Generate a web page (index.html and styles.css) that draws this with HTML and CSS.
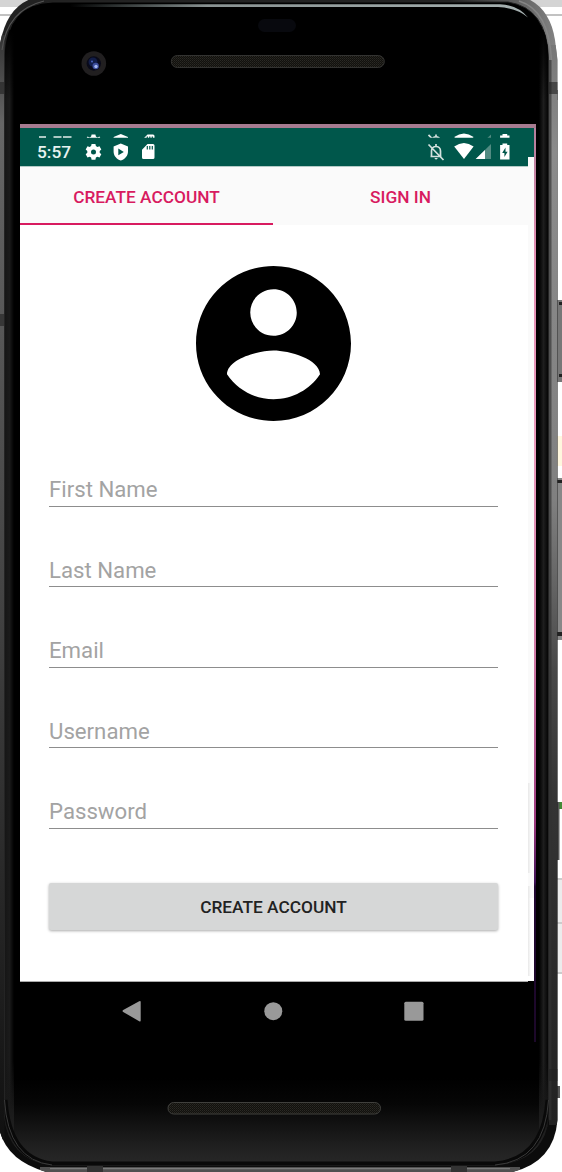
FILE: index.html
```html
<!DOCTYPE html>
<html lang="en">
<head>
<meta charset="utf-8">
<title>Create Account</title>
<link rel="stylesheet" href="styles.css">
</head>
<body>
<svg class="device" viewBox="0 0 562 1172" aria-hidden="true">
  <defs>
    <linearGradient id="rail" x1="0" y1="0" x2="0" y2="1">
      <stop offset="0" stop-color="#777"/><stop offset=".1" stop-color="#8b8b8b"/><stop offset=".42" stop-color="#808080"/><stop offset=".58" stop-color="#484848"/><stop offset=".7" stop-color="#343434"/><stop offset="1" stop-color="#222"/>
    </linearGradient>
    <linearGradient id="railLeft" x1="0" y1="0" x2="0" y2="1">
      <stop offset="0" stop-color="#333"/><stop offset=".08" stop-color="#666"/><stop offset=".5" stop-color="#444"/><stop offset="1" stop-color="#101010"/>
    </linearGradient>
    <linearGradient id="shell" x1="0" y1="0" x2="1" y2="0">
      <stop offset="0" stop-color="#222"/><stop offset=".8" stop-color="#222"/><stop offset="1" stop-color="#888"/>
    </linearGradient>
    <linearGradient id="chin" x1="0" y1="0" x2="0" y2="1">
      <stop offset="0" stop-color="#262626" stop-opacity="0"/><stop offset=".3" stop-color="#262626" stop-opacity=".15"/><stop offset=".8" stop-color="#262626" stop-opacity=".85"/><stop offset="1" stop-color="#282828"/>
    </linearGradient>
    <linearGradient id="shine" x1="0" y1="0" x2="1" y2="0">
      <stop offset="0" stop-color="#899" stop-opacity="0"/><stop offset=".3" stop-color="#899292"/><stop offset="1" stop-color="#a5b0b0"/>
    </linearGradient>
    <linearGradient id="edgeLeft" x1="0" y1="0" x2="1" y2="0">
      <stop offset="0" stop-color="#161616"/><stop offset=".5" stop-color="#1b1b1b"/><stop offset="1" stop-color="#000"/>
    </linearGradient>
    <linearGradient id="edgeRight" x1="0" y1="0" x2="1" y2="0">
      <stop offset="0" stop-color="#000"/><stop offset=".5" stop-color="#1e1e1e"/><stop offset="1" stop-color="#050505"/>
    </linearGradient>
    <linearGradient id="fadeTop" x1="0" y1="0" x2="0" y2="1"><stop offset="0"/><stop offset="1" stop-opacity="0"/></linearGradient>
    <linearGradient id="fadeBottom" x1="0" y1="0" x2="0" y2="1"><stop offset="0" stop-color="#161616" stop-opacity="0"/><stop offset="1" stop-color="#161616"/></linearGradient>
    <pattern id="mesh" width="2" height="2" patternUnits="userSpaceOnUse"><rect width="2" height="2" fill="#11110e"/><rect width="1" height="1" fill="#2b2924"/><rect x="1" y="1" width="1" height="1" fill="#22201b"/></pattern>
    <clipPath id="body"><path d="M-1 50Q5 6 34-2H526Q550 8 555 40L557.500 60V1120Q554 1164 508 1173H50Q6 1162-1 1128Z"/></clipPath>
    <clipPath id="face"><path d="M4.500 58Q6 3 53 2H508Q547 8 548.500 58V1116Q545 1161 495 1165H52Q9 1160 4.500 1116Z"/></clipPath>
  </defs>
  <path fill="#d4d4d4" d="M0 0H562V7H0Z"/><path fill="#c2c2c2" d="M0 14H562V16H0Z"/>
  <path fill="#777" d="M557 300H562V382H557Z"/><path fill="#222" d="M559 302h3v3h-3zm0 72h3v3h-3z"/>
  <path fill="#fff7de" d="M557 436H562V466H557Z"/>
  <path fill="#888" d="M557 478H562V640H557Z"/><path fill="#222" d="M557 480h5v3h-5zm0 152h5v4h-5z"/>
  <path fill="#438a36" d="M559 802H562V809H559Z"/><path fill="#555" d="M557 802h2.500v58H557z"/>
  <path fill="#ececec" d="M557 878h5v96h-5z"/><path fill="#ccc" d="M557 878h5v2h-5zm0 44h5v2h-5zm0 50h5v2h-5z"/>
  <path fill="#555" d="M557 1086h3v12h-3z"/>
  <g clip-path="url(#body)">
    <path fill="url(#shell)" d="M0 0H562V100H0Z"/>
    <path fill="#0c0c0c" d="M0 90H562V1172H0Z"/>
    <path fill="url(#railLeft)" d="M0 35H4.500V1140H0Z"/>
    <path fill="url(#rail)" d="M549 45H557.500V1125H549Z"/>
    <path fill="#333" fill-opacity=".65" d="M549 60h2.500v1060H549z"/>
    <path fill="#222" fill-opacity=".6" d="M0 82h4v12H0zm0 232h4v12H0zm549-232h9v12h-9zm0 987h9v12h-9z"/>
    <path fill="#505050" d="M40 1167H520V1172H40Z"/><path fill="#7b7b7b" d="M50 1168H510V1169.300H50Z"/>
    <path fill="#333" d="M87 1166h16v6H87zm364 0h16v6h-16z"/>
    <path fill="#000" stroke="#242424" d="M4.500 58Q6 3 53 2H508Q547 8 548.500 58V1116Q545 1161 495 1165H52Q9 1160 4.500 1116Z"/>
    <g clip-path="url(#face)">
      <path fill="url(#edgeLeft)" d="M5 30H14V1165H5Z"/><path fill="url(#edgeRight)" d="M539 30H548V1165H539Z"/>
      <path fill="url(#fadeTop)" d="M5 30H14V100H5zm534 0h9v70h-9z"/>
      <path fill="url(#fadeBottom)" d="M5 1060h9v50H5zm534 0h9v50h-9z"/>
      <path fill="#161616" d="M5 1110h9v55H5zm534 0h9v55h-9z"/>
      <path fill="url(#chin)" d="M5 1078H548V1165H5Z"/>
      <path fill="none" stroke="#090909" stroke-width="5" d="M5 1100Q9 1159 52 1164H495Q544 1160 548 1100"/>
    </g>
    <path fill="none" stroke="#3a3a3a" d="M4.500 1100Q8 1160 52 1165M548.500 1100Q545 1161 495 1165"/>
    <path fill="none" stroke="#555" stroke-width="1.200" d="M2 50Q7 10 44 1"/>
    <path fill="none" stroke="#858585" stroke-width="1.500" d="M519 1Q549 10 551.500 60"/>
  </g>
  <path fill="url(#shine)" d="M70 4.300H500Q518 5 528 17.500Q517 8 498 7H70Z"/>
  <rect x="258" y="19" width="38" height="13" rx="6.500" fill="#08090e"/>
  <circle cx="93.800" cy="63.500" r="12.300" fill="#211f20"/><circle cx="93.800" cy="63.500" r="7.200" fill="#090a19"/>
  <circle cx="93" cy="62" r="4.500" fill="#121d48"/><circle cx="95.700" cy="66" r="3.200" fill="#3c4d9b"/><circle cx="96" cy="66.500" r="1.700" fill="#a5b8f0"/><circle cx="92" cy="61.500" r="1" fill="#4a65c0"/>
  <rect x="171.300" y="55.500" width="213" height="12" rx="6" fill="url(#mesh)" stroke="#333331"/>
  <rect x="168" y="1102.500" width="212.500" height="11.500" rx="5.700" fill="url(#mesh)" stroke="#40403d"/>
</svg>
<main class="emulator">
  <div class="window">
    <div class="screen">
      <header class="status">
        <time class="clock">5:57</time>
        <svg class="status-art" viewBox="20 128 508 38" aria-hidden="true">
          <defs>
            <clipPath id="sliver"><path d="M20 128H528V137.700H20Z"/></clipPath>
            <g id="tray">
              <path fill="#fff" fill-rule="evenodd" d="M91.600 144h3.800l.5 2.100 1.500.9 2.100-.8 1.800 3.200-1.600 1.500v1.900l1.600 1.500-1.800 3.200-2.100-.8-1.500.9-.5 2.100h-3.800l-.5-2.100-1.500-.9-2.100.8-1.800-3.200 1.600-1.500v-1.900l-1.600-1.500 1.800-3.200 2.100.8 1.500-.9zM93.500 149.400a2.500 2.500 0 1 0 0 5a2.500 2.500 0 1 0 0-5z"/>
              <path fill="#fff" fill-rule="evenodd" d="M120.800 143.500l7.200 3v5c0 4.300-3 7.700-7.200 9-4.200-1.300-7.200-4.700-7.200-9v-5zM118.300 148.500v6.800l5.500-3.400z"/>
              <path fill="#fff" fill-rule="evenodd" d="M147.500 144H153q1.500 0 1.500 1.500v12q0 1.500-1.500 1.500h-9.500q-1.500 0-1.500-1.500V149.700zM146.700 146v3.500h1.200V146zm2.500 0v3.500h1.200V146zm2.500 0v3.500h1.200V146z"/>
              <path fill="none" stroke="#d5e2df" stroke-width="1.700" d="M430.500 156.500h11M431.500 156v-5c0-6 9-6 9 0v5M436 146v-2M428.500 144.500l15 15.500"/>
              <path fill="#d5e2df" d="M434.400 158h3.400q-1.700 3-3.400 0z"/>
              <path fill="#fff" d="M454.200 146.500q9.800-7 19.400 0L464 159z"/>
              <path fill="#528b82" d="M491 144v15h-15.300z"/><path fill="#fff" d="M485 150v9h-9.300z"/>
              <path fill="#fff" fill-rule="evenodd" d="M502.500 143.500h4.700v1.600h2.300v14.300h-9.400V145.100h2.400zM505.500 147.500l-3.300 5.400h2.200v4l3.200-5.200h-2.100z"/>
            </g>
          </defs>
          <use href="#tray"/>
          <g clip-path="url(#sliver)"><use href="#tray" transform="translate(0 -9.600)"/></g>
          <path fill="#e2eeeb" d="M39 136.200h7v1.500h-7zm14.500 0h8v1.500h-8zm9.500 0h8.500v1.500H63z"/>
        </svg>
      </header>
      <nav class="tabs"><a class="tab selected">CREATE ACCOUNT</a><a class="tab">SIGN IN</a></nav>
      <section class="account">
        <svg class="avatar" viewBox="2 2 20 20" aria-hidden="true"><path fill-rule="evenodd" d="M12 2C6.480 2 2 6.480 2 12s4.480 10 10 10 10-4.480 10-10S17.520 2 12 2zm0 3c1.660 0 3 1.340 3 3s-1.340 3-3 3-3-1.340-3-3 1.340-3 3-3zm0 14.200c-2.500 0-4.710-1.280-6-3.220.030-1.990 4-3.080 6-3.080s5.970 1.090 6 3.080c-1.290 1.940-3.500 3.220-6 3.220z"/></svg>
        <form class="fields">
          <div class="field">First Name</div>
          <div class="field">Last Name</div>
          <div class="field">Email</div>
          <div class="field">Username</div>
          <div class="field">Password</div>
          <button class="submit" type="button">CREATE ACCOUNT</button>
        </form>
      </section>
    </div>
    <div class="gutter"></div>
    <div class="strip"></div>
  </div>
  <svg class="navigation" viewBox="20 982 516 60" aria-hidden="true" fill="#999">
    <path d="M122.500 1011q0-.6.700-1l16-8.700q1.500-.7 1.500.7v18.500q0 1.500-1.500.7l-16-9.200q-.7-.4-.7-1z"/><circle cx="273.300" cy="1011.200" r="9"/><rect x="404.300" y="1001.700" width="19.200" height="19" rx="1.500"/>
  </svg>
</main>
</body>
</html>
```

FILE: styles.css
```css
* { box-sizing: border-box; }
body { margin: 0; width: 562px; height: 1172px; overflow: hidden; background: #fff; font-family: Roboto, sans-serif; }
.device { position: absolute; left: 0; top: 0; width: 562px; height: 1172px; }
.emulator { position: relative; width: 536px; padding: 124px 0 0 20px; }
.window { display: grid; grid-template-columns: 508px 6px 2px; grid-template-rows: 854px; height: 858px; border-top: 4px solid #a67b90; }
.screen { background: #fff; border-bottom: 1px solid #aaa; }
.status { position: relative; height: 38px; padding: 14px 17px 0; background: #00574b; }
.clock { display: block; font-size: 17.3px; line-height: 20px; font-weight: 500; color: #e8f3f0; }
.status-art { position: absolute; left: 0; top: 0; width: 508px; height: 38px; }
.tabs { display: grid; grid-template-columns: 253px 255px; height: 59px; background: #fafafa; border-top: 1px solid #b3cac6; }
.tab { display: flex; align-items: center; justify-content: center; padding-top: 4px; font-size: 17.3px; font-weight: 500; color: #d81b60; border-bottom: 2px solid transparent; }
.selected { border-bottom-color: #d81b60; }
.account { padding: 41px 30px 0 29px; }
.avatar { display: block; width: 155px; height: 155px; margin-left: 147px; }
.fields { display: flex; flex-direction: column; padding-top: 5px; }
.field { height: 80.6px; padding-top: 50px; font-size: 22.2px; line-height: 26px; color: #a3a3a3; border-bottom: 1.3px solid #8d8d8d; }
.submit { height: 47px; margin-top: 54.3px; border: 0; border-radius: 2px; background: #d6d7d7; box-shadow: 0 1px 3px #0005; font: 500 17.3px Roboto, sans-serif; color: #222; }
.gutter { background: linear-gradient(90deg, #e8e8e8, #fff0) 0 655px / 3px 90px no-repeat, linear-gradient(90deg, #e8e8e8, #fff0) 0 758px / 3px 90px no-repeat, linear-gradient(#00574b 29px, #fafafa 29px 770px, #fff 770px); margin-bottom: 1px; }
.strip { height: 914px; background: linear-gradient(#b37e9b, #e28eb2 14%, #e89abb 36%, #ce78a4 58%, #9b397d 76%, #401357 82.500%, #210732 83%, #1c0829); }
.navigation { display: block; width: 516px; height: 60px; }
```
